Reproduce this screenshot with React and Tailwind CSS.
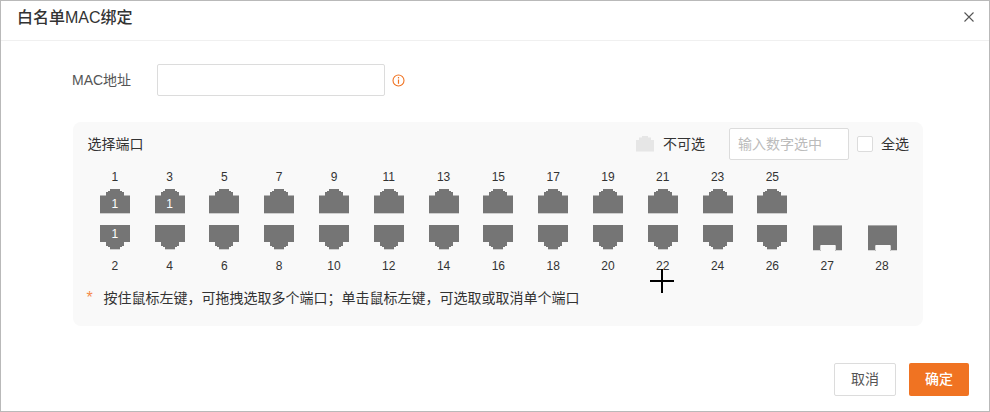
import React from "react";

const FONT = "font-['Liberation_Sans','Noto_Sans_CJK_SC',sans-serif]";

function Port({ dir, value }) {
  if (dir === "giga") {
    return (
      <svg width="30" height="26" viewBox="0 0 30 26" className="block">
        <path d="M1 0H30V26H23V20H9V26H1Z" fill="#757575" />
        <path d="M1 0H30V1H1Z" fill="#a8a8a8" />
        <path d="M1 25.5H8.5V20.5H9M23 20.5H23.5V25.5H30" fill="none" stroke="#d6d6d6" strokeWidth="1" />
      </svg>
    );
  }
  const up = dir === "up";
  return (
    <div className="relative w-[30px] h-[25px]">
      <svg width="30" height="25" viewBox="0 0 30 25" className="block">
        {up ? (
          <>
            <path d="M10 0H20V2H22V3H24V6.5H30V24H0V6.5H6V3H8V2H10Z" fill="#757575" />
            <path d="M0 24.5H30" stroke="#cfcfcf" strokeWidth="1" />
          </>
        ) : (
          <>
            <path d="M0 0H30V17H24V21H22V22H20V24H10V22H8V21H6V17H0Z" fill="#757575" />
            <path d="M10 24.5H20" stroke="#d0d0d0" strokeWidth="1" />
          </>
        )}
      </svg>
      {value ? (
        <span className={`absolute left-0 right-0 text-center text-white text-[12px] leading-[16px] ${up ? "top-[7px]" : "top-[1px]"}`}>
          {value}
        </span>
      ) : null}
    </div>
  );
}

function TopCell({ n, value }) {
  return (
    <div className="flex flex-col items-center">
      <span className="text-[12px] leading-[16px] text-[#333]">{n}</span>
      <div className="mt-[4px]">
        <Port dir="up" value={value} />
      </div>
    </div>
  );
}

function BottomCell({ n, value, giga }) {
  return (
    <div className="flex flex-col items-center">
      <div className="h-[25px]">
        <Port dir={giga ? "giga" : "down"} value={value} />
      </div>
      <span className="mt-[8px] text-[12px] leading-[16px] text-[#333]">{n}</span>
    </div>
  );
}

export default function App() {
  const top = [1, 3, 5, 7, 9, 11, 13, 15, 17, 19, 21, 23, 25];
  const bottom = [2, 4, 6, 8, 10, 12, 14, 16, 18, 20, 22, 24, 26, 27, 28];
  const topVal = { 1: "1", 3: "1" };
  const bottomVal = { 2: "1" };
  return (
    <div className={`relative box-border w-[990px] h-[412px] bg-white border border-[#b9b9b9] flex flex-col overflow-hidden ${FONT}`}>
      <div className="h-[40px] shrink-0 border-b border-[#f0f0f0] flex items-center justify-between pl-[16px] pr-[15px] pb-[6px]">
        <span className="text-[16px] font-medium leading-[30px] text-[#333]">白名单MAC绑定</span>
        <svg width="10" height="10" viewBox="0 0 10 10" className="-mt-[1px]">
          <path d="M0.5 0.5L9.5 9.5M9.5 0.5L0.5 9.5" stroke="#555" strokeWidth="1.1" fill="none" />
        </svg>
      </div>

      <div className="mt-[23px] flex items-center pl-[71px]">
        <span className="w-[85px] mt-[1px] text-[14px] text-[#555]">MAC地址</span>
        <input className="box-border w-[228px] h-[32px] bg-white border border-[#dcdcdc] rounded-[2px] outline-none" />
        <svg width="13" height="13" viewBox="0 0 13 13" className="ml-[7px] mt-[1px]">
          <circle cx="6.5" cy="6.5" r="5.5" fill="none" stroke="#f07322" strokeWidth="1.1" />
          <path d="M6.5 5.5V9.8" stroke="#f07322" strokeWidth="1.2" />
          <path d="M6.5 3V4.4" stroke="#f07322" strokeWidth="1.2" />
        </svg>
      </div>

      <div className="mt-[26px] ml-[72px] w-[850px] h-[204px] box-border bg-[#f9f9f9] rounded-[8px] pl-[14.4px] pr-[14px] pt-[6px]">
        <div className="flex items-center h-[32px] text-[14px] text-[#333]">
          <span>选择端口</span>
          <div className="ml-auto flex items-center">
            <svg width="18" height="16" viewBox="0 0 18 16" className="block">
              <path d="M6 0H12V1.5H15V4H18V15.5H0V4H3V1.5H6Z" fill="#e6e6e6" />
            </svg>
            <span className="ml-[9px]">不可选</span>
            <input
              placeholder="输入数字选中"
              className="ml-[24px] box-border w-[120px] h-[32px] bg-white border border-[#dcdcdc] rounded-[2px] px-[8px] text-[14px] outline-none placeholder:text-[#bbb]"
            />
            <span className="ml-[8px] box-border w-[16px] h-[16px] bg-white border border-[#dcdcdc] rounded-[2px]" />
            <span className="ml-[8px]">全选</span>
          </div>
        </div>

        <div className="mt-[9px] grid grid-cols-[repeat(15,54.8px)]">
          {top.map((n) => (
            <TopCell key={n} n={n} value={topVal[n]} />
          ))}
        </div>
        <div className="mt-[11px] grid grid-cols-[repeat(15,54.8px)]">
          {bottom.map((n) => (
            <BottomCell key={n} n={n} value={bottomVal[n]} giga={n > 26} />
          ))}
        </div>

        <div className="mt-[13px] flex items-center text-[14px] leading-[22px] text-[#333]">
          <span className="text-[#f58a4b] text-[16px] w-[16px] -ml-[1px]">*</span>
          <span className="ml-[1px]">按住鼠标左键，可拖拽选取多个端口；单击鼠标左键，可选取或取消单个端口</span>
        </div>
      </div>

      <div className="mt-auto mb-[15px] flex justify-end gap-[13px] pr-[20px]">
        <button className="box-border w-[62px] h-[33px] bg-white border border-[#dcdcdc] rounded-[2px] text-[14px] text-[#555]">取消</button>
        <button className="box-border w-[60px] h-[33px] bg-[#f07322] rounded-[2px] text-[14px] text-white font-medium">确定</button>
      </div>

      <svg width="24" height="24" viewBox="0 0 24 24" className="absolute left-[649px] top-[268px]">
        <path d="M12 0V24M0 12H24" stroke="#000" strokeWidth="2" fill="none" />
      </svg>
    </div>
  );
}
